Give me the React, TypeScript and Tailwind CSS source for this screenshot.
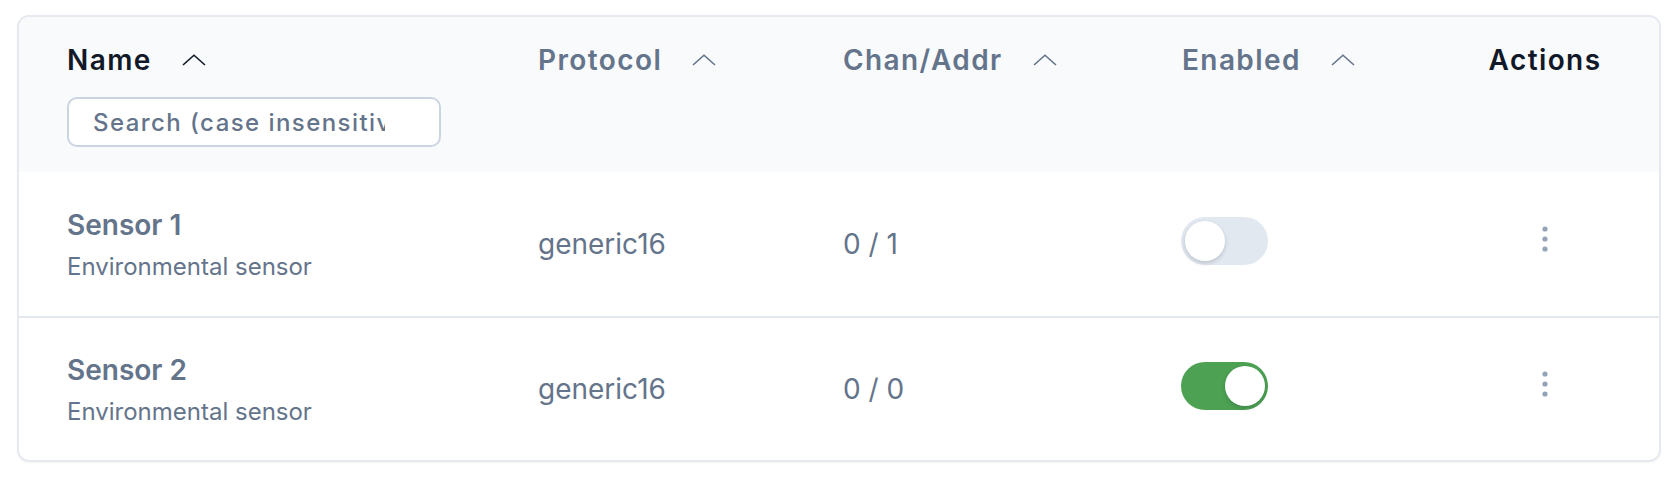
import { useState } from "react";

type Device = {
  name: string;
  description: string;
  protocol: string;
  chan: string;
  enabled: boolean;
};

const DEVICES: Device[] = [
  { name: "Sensor 1", description: "Environmental sensor", protocol: "generic16", chan: "0 / 1", enabled: false },
  { name: "Sensor 2", description: "Environmental sensor", protocol: "generic16", chan: "0 / 0", enabled: true },
];

function SortIcon({ dark }: { dark?: boolean }) {
  return (
    <svg width="24" height="12" viewBox="0 0 24 12" fill="none" className={dark ? "text-[#111827]" : "text-[#64748b]"}>
      <polyline points="1,11 12,1.2 23,11" stroke="currentColor" strokeWidth="1.6" strokeLinejoin="miter" />
    </svg>
  );
}

function HeaderLabel({ label, dark, sortable = true }: { label: string; dark?: boolean; sortable?: boolean }) {
  return (
    <div className="flex items-center gap-[30px] h-[40px]">
      <span
        className={`text-[28px] leading-[40px] font-semibold tracking-[0.05em] ${dark ? "text-[#111827]" : "text-[#64748b]"}`}
      >
        {label}
      </span>
      {sortable && <SortIcon dark={dark} />}
    </div>
  );
}

function Toggle({ on, onChange }: { on: boolean; onChange: () => void }) {
  return (
    <button
      onClick={onChange}
      className={`flex w-[87px] h-[48px] rounded-full p-[4px] ${on ? "justify-end bg-[#4ca152] pr-[3px]" : "justify-start bg-[#e2e8f0]"}`}
    >
      <span className="block w-[40px] h-[40px] rounded-full bg-white shadow-[0_2px_4px_rgba(15,23,42,0.18)]" />
    </button>
  );
}

function Dots() {
  return (
    <svg width="6" height="26" viewBox="0 0 6 26" className="text-[#94a3b8]">
      <circle cx="3" cy="3" r="2.6" fill="currentColor" />
      <circle cx="3" cy="13" r="2.6" fill="currentColor" />
      <circle cx="3" cy="23" r="2.6" fill="currentColor" />
    </svg>
  );
}

export default function App() {
  const [devices, setDevices] = useState<Device[]>(DEVICES);
  const [query, setQuery] = useState("");

  function toggle(i: number) {
    setDevices(d => d.map((x, j) => (j === i ? { ...x, enabled: !x.enabled } : x)));
  }

  const rows = devices.filter(d => d.name.toLowerCase().includes(query.toLowerCase()));

  return (
    <div className="w-[1680px] h-[482px] bg-white pt-[15px] pl-[17px] font-['Inter',sans-serif]">
      <div className="w-[1644px] border-2 border-[#e6eaf0] rounded-[12px] overflow-hidden bg-white shadow-[0_1px_2px_rgba(15,23,42,0.04)]">
        {/* header */}
        <div className="grid grid-cols-[471px_305px_339px_309px_108px] pl-[48px] pr-[60px] h-[155px] pt-[23px] bg-[#f8fafc]">
          <div className="flex flex-col">
            <HeaderLabel label="Name" dark />
            <input
              value={query}
              onChange={e => setQuery(e.target.value)}
              placeholder="Search (case insensitive)"
              className="mt-[17px] w-[374px] h-[50px] rounded-[10px] border-2 border-[#cbd5e1] bg-white pl-[24px] pr-[54px] text-[24px] font-medium tracking-[0.06em] text-[#334155] placeholder:text-[#64748b] outline-none"
            />
          </div>
          <HeaderLabel label="Protocol" />
          <HeaderLabel label="Chan/Addr" />
          <HeaderLabel label="Enabled" />
          <div className="flex justify-center h-[40px]">
            <span className="text-[28px] leading-[40px] font-semibold tracking-[0.05em] text-[#111827]">Actions</span>
          </div>
        </div>

        {/* rows */}
        {rows.map((d, i) => (
          <div
            key={d.name}
            className={`grid grid-cols-[471px_305px_339px_309px_108px] pl-[48px] pr-[60px] h-[144px] items-center ${i > 0 ? "border-t-2 border-[#e2e8f0]" : ""}`}
          >
            <div className="flex flex-col">
              <span className="text-[28px] leading-[40px] font-semibold text-[#64748b]">{d.name}</span>
              <span className="mt-[6px] text-[24px] leading-[32px] text-[#64748b]">{d.description}</span>
            </div>
            <span className="text-[28px] leading-[40px] text-[#64748b]">{d.protocol}</span>
            <span className="text-[28px] leading-[40px] text-[#64748b]">{d.chan}</span>
            <div className="flex mb-[6px] -ml-[1px]">
              <Toggle on={d.enabled} onChange={() => toggle(devices.indexOf(d))} />
            </div>
            <div className="flex justify-center mb-[10px]">
              <button className="px-2">
                <Dots />
              </button>
            </div>
          </div>
        ))}
      </div>
    </div>
  );
}
